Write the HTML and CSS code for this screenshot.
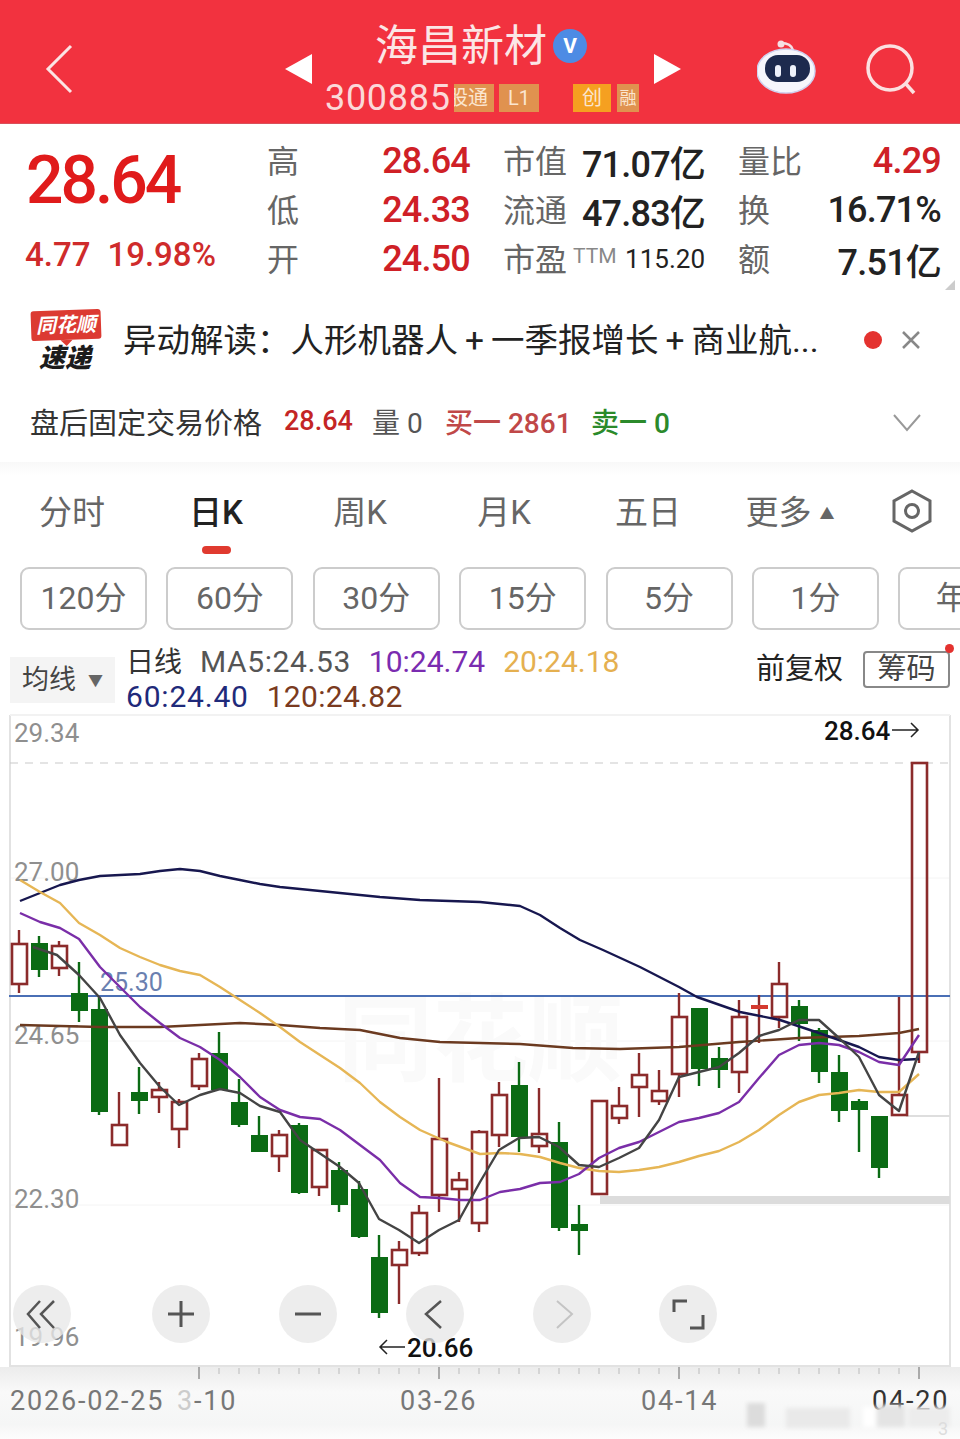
FILE: index.html
```html
<!DOCTYPE html>
<html lang="zh-CN">
<head>
    <meta charset="UTF-8">
    <meta name="viewport" content="width=device-width, initial-scale=1.0">
    <title>海昌新材 300885</title>
    <link rel="stylesheet" href="styles.css">
</head>
<body>
    <header class="head">
        <svg class="back" viewBox="0 0 28 50"><path d="M26 2 L3 25 L26 48"/></svg>
        <div class="pager">
            <span class="tri tri-left"></span>
            <div class="stock">
                <div class="stock-name">
                    <span>海昌新材</span>
                    <span class="vbadge">V</span>
                </div>
                <div class="stock-code">
                    <span class="code">300885</span>
                    <span class="tag tag-clip"><b>股通</b></span>
                    <span class="tag">L1</span>
                    <span class="tag tag-orange">创</span>
                    <span class="tag tag-narrow">融</span>
                </div>
            </div>
            <span class="tri tri-right"></span>
        </div>
        <svg class="robot" viewBox="0 0 60 54">
            <path d="M24 3 Q34 3 36 10" fill="none" stroke="#f6dfe4" stroke-width="2.5"/>
            <circle cx="24" cy="4" r="3.5" fill="#f6dfe4"/>
            <ellipse cx="29" cy="31" rx="29" ry="22" fill="#f6f6fc" stroke="#cfd2f0" stroke-width="1.5"/>
            <rect x="8" y="15" width="45" height="27" rx="13" fill="#1d2a4e"/>
            <rect x="18" y="25" width="6" height="12" rx="3" fill="#eef1fb"/>
            <rect x="33" y="25" width="6" height="12" rx="3" fill="#eef1fb"/>
        </svg>
        <svg class="search" viewBox="0 0 52 52"><circle cx="25" cy="25" r="22"/><path d="M41 41 L49 50"/></svg>
    </header>

    <section class="quote">
        <div class="price">
            <div class="price-now">28.64</div>
            <div class="price-change"><span>4.77</span><span>19.98%</span></div>
        </div>
        <div class="stats">
            <div class="stat"><span class="stat-label">高</span><span class="stat-val red">28.64</span></div>
            <div class="stat"><span class="stat-label">市值</span><span class="stat-val">71.07亿</span></div>
            <div class="stat"><span class="stat-label">量比</span><span class="stat-val red">4.29</span></div>
            <div class="stat"><span class="stat-label">低</span><span class="stat-val red">24.33</span></div>
            <div class="stat"><span class="stat-label">流通</span><span class="stat-val">47.83亿</span></div>
            <div class="stat"><span class="stat-label">换</span><span class="stat-val">16.71%</span></div>
            <div class="stat"><span class="stat-label">开</span><span class="stat-val red">24.50</span></div>
            <div class="stat"><span class="stat-label">市盈<small>TTM</small></span><span class="stat-val stat-small">115.20</span></div>
            <div class="stat"><span class="stat-label">额</span><span class="stat-val">7.51亿</span></div>
        </div>
        <span class="corner"></span>
    </section>

    <section class="notice">
        <div class="logo">
            <div class="logo-tag">同花顺</div>
            <div class="logo-text">速递</div>
        </div>
        <div class="notice-text">异动解读：人形机器人<span class="plus">+</span>一季报增长<span class="plus">+</span>商业航...</div>
        <span class="notice-dot"></span>
        <svg class="notice-close" viewBox="0 0 20 20"><path d="M2 2 L18 18 M18 2 L2 18"/></svg>
    </section>

    <section class="after">
        <span class="after-title">盘后固定交易价格</span>
        <span class="after-price">28.64</span>
        <span class="after-vol">量 0</span>
        <span class="after-buy">买一 2861</span>
        <span class="after-sell">卖一 0</span>
        <svg class="after-more" viewBox="0 0 28 18"><path d="M1 1 L14 16 L27 1"/></svg>
    </section>

    <nav class="tabs">
        <a>分时</a>
        <a class="active">日K</a>
        <a>周K</a>
        <a>月K</a>
        <a>五日</a>
        <a>更多<i class="up-arrow">▲</i></a>
        <svg class="hex" viewBox="0 0 42 44"><path d="M21 2 L39 12 V32 L21 42 L3 32 V12 Z"/><circle cx="21" cy="22" r="6.5"/></svg>
    </nav>

    <div class="periods">
        <a>120分</a>
        <a>60分</a>
        <a>30分</a>
        <a>15分</a>
        <a>5分</a>
        <a>1分</a>
        <a>年K</a>
    </div>

    <div class="legend">
        <div class="ma-btn">均线<i>▼</i></div>
        <div class="ma-lines">
            <div>
                <span class="ma-name">日线</span>
                <span class="ma5">MA5:24.53</span>
                <span class="ma10">10:24.74</span>
                <span class="ma20">20:24.18</span>
            </div>
            <div>
                <span class="ma60">60:24.40</span>
                <span class="ma120">120:24.82</span>
            </div>
        </div>
        <div class="legend-right">
            <span class="fq">前复权</span>
            <span class="chip">筹码</span>
        </div>
    </div>

    <svg class="chart" viewBox="0 710 960 729">
        <defs>
            <linearGradient id="axisBg" x1="0" y1="0" x2="0" y2="1">
                <stop offset="0" stop-color="#ececec"/>
                <stop offset="0.35" stop-color="#f9f9f9"/>
                <stop offset="0.8" stop-color="#f5f6f6"/>
                <stop offset="1" stop-color="#fdfdfd"/>
            </linearGradient>
            <filter id="soft"><feGaussianBlur stdDeviation="2"/></filter>
        </defs>

        <!-- frame and grid -->
        <rect class="axis-bg" x="0" y="1367" width="960" height="72"/>
        <path class="grid" d="M10 878H950M10 1041H950M10 1205H950"/>
        <path class="frame" d="M10 715V1366H950V715"/>
        <path class="frame-top" d="M10 715H950"/>
        <text class="watermark" x="338" y="1074">同花顺</text>
        <path class="dash" d="M10 763H950"/>
        <path class="grid-dark" d="M906 1116H950"/>
        <rect class="support" x="600" y="1196" width="350" height="8"/>
        <path class="blue-line" d="M9 996H950"/>

        <!-- price scale -->
        <text class="scale" x="14" y="742">29.34</text>
        <text class="scale" x="14" y="881">27.00</text>
        <text class="scale" x="14" y="1044">24.65</text>
        <text class="scale" x="14" y="1208">22.30</text>
        <text class="scale" x="14" y="1346">19.96</text>
        <text class="blue-label" x="100" y="991">25.30</text>

        <!-- wicks, falling days -->
        <path class="wick-down" d="M39 936V977M79 962V1022M99 997V1115M139 1067V1114M219 1032V1090M239 1079V1127M259 1116V1152M299 1123V1194M339 1162V1212M359 1181V1238M379 1235V1318M519 1062V1152M559 1122V1231M579 1205V1255M699 1069V1086M719 1047V1088M799 1000V1041M819 1028V1083M839 1055V1122M859 1099V1152M879 1168V1178"/>
        <!-- bodies, falling days -->
        <g class="body-down">
            <rect x="31" y="943" width="17" height="27"/>
            <rect x="71" y="993" width="17" height="18"/>
            <rect x="91" y="1009" width="17" height="103"/>
            <rect x="131" y="1092" width="17" height="9"/>
            <rect x="211" y="1053" width="17" height="37"/>
            <rect x="231" y="1102" width="17" height="23"/>
            <rect x="251" y="1135" width="17" height="17"/>
            <rect x="291" y="1125" width="17" height="68"/>
            <rect x="331" y="1170" width="17" height="35"/>
            <rect x="351" y="1189" width="17" height="48"/>
            <rect x="371" y="1257" width="17" height="56"/>
            <rect x="511" y="1085" width="17" height="52"/>
            <rect x="551" y="1142" width="17" height="86"/>
            <rect x="571" y="1224" width="17" height="7"/>
            <rect x="691" y="1008" width="17" height="61"/>
            <rect x="711" y="1058" width="17" height="12"/>
            <rect x="791" y="1006" width="17" height="18"/>
            <rect x="811" y="1030" width="17" height="42"/>
            <rect x="831" y="1072" width="17" height="39"/>
            <rect x="851" y="1101" width="17" height="9"/>
            <rect x="871" y="1116" width="17" height="52"/>
        </g>

        <!-- wicks, rising days -->
        <path class="wick-up" d="M19 930V944M19 984V993M59 941V946M59 968V976M119 1092V1125M159 1082V1090M159 1097V1113M179 1099V1102M179 1129V1148M199 1053V1059M199 1086V1090M279 1130V1135M279 1156V1172M319 1149V1150M319 1187V1196M399 1241V1250M399 1265V1304M419 1205V1213M419 1253V1256M439 1078V1139M439 1195V1212M459 1172V1180M459 1189V1222M479 1130V1132M479 1223V1232M499 1082V1095M499 1135V1147M539 1088V1134M539 1146V1153M619 1087V1106M619 1118V1124M639 1053V1075M639 1087V1117M659 1070V1091M659 1101V1105M679 993V1017M679 1074V1097M739 1000V1017M739 1072V1093M759 995V1043M779 962V984M779 1017V1028M899 997V1095M919 1052V1063"/>
        <!-- bodies, rising days -->
        <g class="body-up">
            <rect x="12" y="944" width="15" height="40"/>
            <rect x="52" y="946" width="15" height="22"/>
            <rect x="112" y="1125" width="15" height="20"/>
            <rect x="152" y="1090" width="15" height="7"/>
            <rect x="172" y="1102" width="15" height="27"/>
            <rect x="192" y="1059" width="15" height="27"/>
            <rect x="272" y="1135" width="15" height="21"/>
            <rect x="312" y="1150" width="15" height="37"/>
            <rect x="392" y="1250" width="15" height="15"/>
            <rect x="412" y="1213" width="15" height="40"/>
            <rect x="432" y="1139" width="15" height="56"/>
            <rect x="452" y="1180" width="15" height="9"/>
            <rect x="472" y="1132" width="15" height="91"/>
            <rect x="492" y="1095" width="15" height="40"/>
            <rect x="532" y="1134" width="15" height="12"/>
            <rect x="592" y="1101" width="15" height="93"/>
            <rect x="612" y="1106" width="15" height="12"/>
            <rect x="632" y="1075" width="15" height="12"/>
            <rect x="652" y="1091" width="15" height="10"/>
            <rect x="672" y="1017" width="15" height="57"/>
            <rect x="732" y="1017" width="15" height="55"/>
            <rect x="772" y="984" width="15" height="33"/>
            <rect x="892" y="1095" width="15" height="20"/>
            <rect x="912" y="763" width="15" height="289"/>
        </g>
        <rect class="body-flat" x="751" y="1005" width="17" height="4"/>

        <!-- moving averages -->
        <polyline class="ma-line l120" points="20,1025 100,1027 160,1027 200,1025 240,1023 280,1025 320,1028 360,1030 400,1038 440,1042 480,1043 520,1044 573,1048 620,1049 679,1047 739,1042 799,1038 859,1036 899,1033 919,1029"/>
        <polyline class="ma-line l60" points="20,901 40,893 60,885 79,880 100,876 140,874 160,871 180,869 200,871 220,876 240,880 260,884 280,887 300,889 320,891 340,893 380,897 420,900 480,902 500,904 520,906 540,915 560,928 580,940 603,950 640,967 679,987 697,997 740,1012 780,1020 819,1033 859,1047 879,1057 899,1060 919,1059"/>
        <polyline class="ma-line l20" points="20,880 40,892 60,903 79,923 100,935 120,948 140,957 160,965 180,971 200,975 220,987 240,1000 260,1013 280,1027 300,1042 320,1055 340,1068 360,1083 380,1102 400,1117 420,1130 447,1142 480,1154 500,1153 520,1154 540,1157 560,1163 579,1168 599,1171 619,1172 639,1170 659,1167 679,1162 699,1156 719,1151 739,1142 759,1130 779,1115 799,1102 819,1095 839,1093 859,1090 879,1092 899,1092 919,1074"/>
        <polyline class="ma-line l10" points="20,913 40,922 60,928 79,939 100,967 120,987 140,1007 160,1023 180,1038 200,1047 220,1060 240,1077 260,1097 280,1110 300,1117 320,1119 340,1130 360,1145 380,1160 400,1183 420,1197 440,1198 460,1200 480,1200 500,1192 520,1189 540,1183 560,1182 579,1174 599,1158 619,1148 639,1142 659,1132 679,1122 699,1118 719,1113 739,1102 759,1078 779,1055 799,1045 819,1043 839,1045 859,1052 879,1062 899,1065 919,1035"/>
        <polyline class="ma-line l5" points="33,947 57,955 68,965 79,975 100,998 120,1035 140,1063 160,1087 179,1105 200,1095 220,1089 240,1093 260,1106 280,1112 300,1140 340,1167 359,1183 379,1219 399,1230 419,1243 439,1230 459,1220 480,1182 499,1150 519,1138 539,1137 559,1147 579,1165 599,1167 619,1158 639,1148 659,1120 679,1077 699,1072 719,1067 739,1053 759,1036 779,1030 799,1020 819,1020 839,1038 859,1057 879,1095 899,1111 919,1052"/>

        <!-- high and low marks -->
        <text class="mark" x="824" y="740">28.64</text>
        <path class="mark-arrow" d="M892 730H918M911 723L918 730L911 737"/>
        <path class="mark-arrow" d="M405 1347H380M387 1340L380 1347L387 1354"/>
        <text class="mark" x="407" y="1357">20.66</text>

        <!-- chart buttons -->
        <g class="round-btn">
            <circle cx="42" cy="1314" r="29"/>
            <circle cx="181" cy="1314" r="29"/>
            <circle cx="308" cy="1314" r="29"/>
            <circle cx="435" cy="1314" r="29"/>
            <circle cx="562" cy="1314" r="29"/>
            <circle cx="688" cy="1314" r="29"/>
        </g>
        <path class="btn-icon" d="M40 1301L28 1314L40 1328M54 1301L41 1314L54 1328"/>
        <path class="btn-icon btn-thick" d="M168 1314H194M181 1301V1327M295 1314H321"/>
        <path class="btn-icon" d="M441 1301L426 1314L441 1328"/>
        <path class="btn-icon btn-off" d="M557 1301L572 1314L557 1328"/>
        <path class="btn-icon btn-thick" d="M674 1312V1301H687M690 1328H703V1315"/>

        <!-- time axis -->
        <path class="tick" d="M219 1368V1374M239 1368V1374M259 1368V1374M279 1368V1374M299 1368V1374M319 1368V1374M339 1368V1374M359 1368V1374M379 1368V1374M399 1368V1374M419 1368V1374M459 1368V1374M479 1368V1374M499 1368V1374M519 1368V1374M539 1368V1374M559 1368V1374M579 1368V1374M599 1368V1374M619 1368V1374M639 1368V1374M659 1368V1374M699 1368V1374M719 1368V1374M739 1368V1374M759 1368V1374M779 1368V1374M799 1368V1374M819 1368V1374M839 1368V1374M859 1368V1374M879 1368V1374M899 1368V1374"/>
        <path class="tick-big" d="M199 1367V1379M439 1367V1379M679 1367V1379M919 1367V1379"/>
        <text class="date" x="10" y="1410">2026-02-25</text>
        <text class="date date-fade" x="177" y="1410">3</text>
        <text class="date" x="194" y="1410">-10</text>
        <text class="date" x="400" y="1410">03-26</text>
        <text class="date" x="641" y="1410">04-14</text>
        <text class="date date-dark" x="872" y="1410">04-20</text>

        <!-- blurred account mark at the bottom -->
        <g class="smear" filter="url(#soft)">
            <rect x="747" y="1403" width="18" height="24" fill="#dcdcdc"/>
            <rect x="786" y="1408" width="64" height="20" fill="#e9e9e9"/>
            <rect x="863" y="1407" width="12" height="20" fill="#fff"/>
            <rect x="877" y="1405" width="28" height="22" fill="#e4e4e4"/>
            <rect x="908" y="1407" width="42" height="20" fill="#ececec"/>
        </g>
        <text class="smear-text" x="938" y="1435">3</text>
    </svg>
</body>
</html>
```

FILE: styles.css
```css
* {
    box-sizing: border-box;
}

body {
    font-family: Roboto, "Noto Sans CJK SC", sans-serif;
    margin: 0;
    width: 960px;
    height: 1439px;
    overflow: hidden;
    background-color: #fff;
    color: #222;
}

/* header */
.head {
    display: flex;
    align-items: center;
    height: 124px;
    padding: 14px 0 0 45px;
    background-color: #f2323f;
    border-bottom: 1px solid #d9505a;
}
.back {
    width: 28px;
    height: 50px;
    fill: none;
    stroke: #fbe4e4;
    stroke-width: 3;
}
.pager {
    display: flex;
    align-items: center;
    margin-left: 212px;
}
.tri {
    width: 0;
    height: 0;
    border-top: 15px solid transparent;
    border-bottom: 15px solid transparent;
}
.tri-left {
    border-right: 27px solid #fff;
}
.tri-right {
    border-left: 27px solid #fff;
}
.stock {
    width: 342px;
    margin-top: -2px;
}
.stock-name {
    display: flex;
    align-items: center;
    height: 46px;
    margin-left: 63px;
    font-size: 43px;
    line-height: 40px;
    color: #fbe6e6;
}
.stock-name span:first-child {
    margin-top: 5px;
}
.vbadge {
    width: 34px;
    height: 34px;
    margin: 5px 0 0 6px;
    border-radius: 50%;
    background-color: #4d8be4;
    color: #fff;
    font-size: 21px;
    font-weight: 700;
    line-height: 34px;
    text-align: center;
}
.stock-code {
    display: flex;
    align-items: center;
    height: 34px;
    margin: 14px 0 0 13px;
}
.code {
    width: 129px;
    font-size: 36px;
    letter-spacing: 0.7px;
    color: #fbd9d9;
}
.tag {
    width: 40px;
    height: 28px;
    margin-right: 5px;
    overflow: hidden;
    background-color: #e0924f;
    color: #fbe6d0;
    font-size: 20px;
    line-height: 28px;
    text-align: center;
}
.tag-clip {
    position: relative;
}
.tag-clip b {
    position: absolute;
    right: 6px;
    width: 40px;
    font-weight: 400;
}
.tag-orange {
    width: 38px;
    margin-left: 29px;
    background-color: #f5a020;
}
.tag-narrow {
    width: 22px;
    margin: 0 0 0 1px;
    font-size: 17px;
}
.robot {
    width: 60px;
    height: 54px;
    margin: -4px 0 0 76px;
}
.search {
    width: 52px;
    height: 52px;
    margin-left: 48px;
    fill: none;
    stroke: #fbe0e0;
    stroke-width: 3.5;
}

/* quote */
.quote {
    position: relative;
    display: flex;
    height: 172px;
    padding-top: 12px;
}
.price {
    width: 267px;
    padding-left: 25px;
    color: #e01b1b;
}
.price-now {
    margin-top: 12px;
    padding-left: 1px;
    font-size: 66px;
    font-weight: 500;
    line-height: 66px;
    letter-spacing: -3px;
}
.price-change {
    display: flex;
    gap: 17px;
    margin-top: 21px;
    color: #cf2b2b;
    font-size: 33px;
    font-weight: 500;
    line-height: 40px;
}
.stats {
    display: grid;
    grid-template-columns: 203px 202px 203px;
    grid-auto-rows: 49px;
    column-gap: 33px;
}
.stat {
    display: flex;
    align-items: center;
    justify-content: space-between;
}
.stat-label {
    padding-bottom: 4px;
    color: #666;
    font-size: 32px;
}
.stat-label small {
    margin-left: 6px;
    color: #888;
    font-size: 21px;
    vertical-align: 8px;
}
.stat-val {
    font-size: 36px;
    font-weight: 500;
    letter-spacing: -0.8px;
    white-space: nowrap;
}
.stat-small {
    font-size: 26px;
    font-weight: 400;
    letter-spacing: 0;
}
.red {
    color: #cf2026;
}
.corner {
    position: absolute;
    right: 5px;
    bottom: 6px;
    border-left: 10px solid transparent;
    border-bottom: 10px solid #ccc;
}

/* notice */
.notice {
    display: flex;
    align-items: center;
    height: 88px;
    padding-left: 31px;
}
.logo {
    width: 72px;
    height: 62px;
    margin-top: 6px;
}
.logo-tag {
    position: relative;
    width: 70px;
    height: 30px;
    margin-top: -2px;
    background-color: #dc3a32;
    border-radius: 3px;
    color: #fff;
    font-size: 20px;
    font-style: italic;
    font-weight: 700;
    line-height: 30px;
    text-align: center;
    transform: rotate(-2deg);
}
.logo-tag::after {
    content: "";
    position: absolute;
    left: 29px;
    top: 30px;
    border-top: 6px solid #dc3a32;
    border-left: 6px solid transparent;
    border-right: 6px solid transparent;
}
.logo-text {
    margin: 4px 0 0 8px;
    color: #1c1c1c;
    font-size: 26px;
    font-style: italic;
    font-weight: 900;
    line-height: 28px;
}
.notice-text {
    width: 713px;
    margin: -6px 0 0 20px;
    color: #222;
    font-size: 33.5px;
    white-space: nowrap;
}
.plus {
    margin: 0 7px;
}
.notice-dot {
    width: 18px;
    height: 18px;
    margin-left: 28px;
    border-radius: 50%;
    background-color: #e4322f;
}
.notice-close {
    width: 20px;
    height: 20px;
    margin-left: 19px;
    fill: none;
    stroke: #888;
    stroke-width: 2.5;
}

/* after hours */
.after {
    display: flex;
    align-items: center;
    height: 78px;
    padding: 0 0 4px 30px;
    font-size: 28px;
    white-space: nowrap;
}
.after-title {
    width: 254px;
    color: #333;
    font-size: 29px;
}
.after-price {
    width: 88px;
    color: #c42525;
    font-size: 27px;
    font-weight: 500;
}
.after-vol {
    width: 73px;
    color: #555;
}
.after-buy {
    width: 146px;
    color: #c04848;
    font-weight: 500;
}
.after-sell {
    width: 302px;
    color: #2b8a2b;
    font-weight: 500;
}
.after-more {
    width: 28px;
    height: 18px;
    margin-top: 4px;
    fill: none;
    stroke: #999;
    stroke-width: 2;
}

/* tabs */
.tabs {
    display: grid;
    grid-template-columns: repeat(6, 144px) 1fr;
    align-items: center;
    height: 95px;
    background: linear-gradient(#f8f8f8, #fff 14px);
    color: #666;
    font-size: 33px;
    text-align: center;
}
.tabs .active {
    position: relative;
    color: #222;
    font-weight: 500;
}
.tabs .active::after {
    content: "";
    position: absolute;
    left: 58px;
    top: 60px;
    width: 29px;
    height: 8px;
    border-radius: 4px;
    background-color: #e03a2f;
}
.up-arrow {
    margin: 0 4px 0 8px;
    font-size: 15px;
    font-style: normal;
    vertical-align: 5px;
}
.hex {
    width: 42px;
    height: 44px;
    margin-top: 3px;
    justify-self: center;
    fill: none;
    stroke: #666;
    stroke-width: 3;
}

/* period buttons */
.periods {
    display: flex;
    gap: 19.4px;
    height: 63px;
    margin-top: 10px;
    padding-left: 20px;
    overflow: hidden;
}
.periods a {
    flex-shrink: 0;
    width: 127px;
    border: 2px solid #ccc;
    border-radius: 9px;
    color: #666;
    font-size: 32px;
    line-height: 59px;
    text-align: center;
}

/* legend */
.legend {
    display: flex;
    height: 70px;
    margin-top: 10px;
    padding-left: 10px;
}
.ma-btn {
    width: 105px;
    height: 46px;
    margin-top: 17px;
    padding-left: 12px;
    background-color: #f4f4f4;
    color: #444;
    font-size: 27px;
    line-height: 46px;
}
.ma-btn i {
    margin-left: 12px;
    color: #666;
    font-size: 15px;
    font-style: normal;
    vertical-align: 3px;
}
.ma-lines {
    margin: 5px 0 0 11px;
    font-size: 30px;
    line-height: 34px;
    white-space: nowrap;
}
.ma-lines span {
    margin-right: 10.5px;
}
.ma-name {
    color: #333;
    font-size: 28px;
}
.ma5 {
    color: #555;
    letter-spacing: 0.6px;
}
.ma10 {
    color: #7a2cb0;
}
.ma20 {
    color: #e5b050;
}
.ma60 {
    color: #1f2a7a;
    letter-spacing: 0.8px;
}
.ma120 {
    color: #7a3a20;
    letter-spacing: 0.3px;
}
.legend-right {
    display: flex;
    align-items: flex-start;
    margin-left: auto;
    padding: 11px 10px 0 0;
}
.fq {
    margin-right: 20px;
    color: #222;
    font-size: 29px;
    line-height: 37px;
}
.chip {
    position: relative;
    width: 87px;
    height: 37px;
    border: 2px solid #888;
    border-radius: 4px;
    color: #444;
    font-size: 29px;
    line-height: 33px;
    text-align: center;
}
.chip::after {
    content: "";
    position: absolute;
    right: -6px;
    top: -9px;
    width: 9px;
    height: 9px;
    border-radius: 50%;
    background-color: #e4322f;
}

/* chart */
.chart {
    display: block;
    width: 960px;
    height: 729px;
}
.axis-bg {
    fill: url(#axisBg);
}
.grid {
    fill: none;
    stroke: #f4f4f4;
    stroke-width: 1;
}
.grid-dark {
    fill: none;
    stroke: #dedede;
    stroke-width: 2;
}
.frame {
    fill: none;
    stroke: #e2e2e2;
    stroke-width: 2;
}
.frame-top {
    fill: none;
    stroke: #f2f2f2;
    stroke-width: 2;
}
.dash {
    fill: none;
    stroke: #c9c9c9;
    stroke-width: 1;
    stroke-dasharray: 8 7;
}
.support {
    fill: #dcdcdc;
}
.blue-line {
    fill: none;
    stroke: #4a6fb5;
    stroke-width: 2;
}
.watermark {
    fill: #fafafa;
    font-size: 95px;
    font-weight: 700;
}
.scale {
    fill: #8f8f8f;
    font-size: 26px;
}
.blue-label {
    fill: #6a80b0;
    font-size: 25px;
}
.wick-up {
    fill: none;
    stroke: #8b2b2b;
    stroke-width: 2.4;
}
.wick-down {
    fill: none;
    stroke: #0b6b14;
    stroke-width: 2.4;
}
.body-up rect {
    fill: none;
    stroke: #8b2b2b;
    stroke-width: 2.6;
}
.body-down rect {
    fill: #0b6b14;
}
.body-flat {
    fill: #d43a2f;
}
.ma-line {
    fill: none;
    stroke-width: 2.4;
    stroke-linejoin: round;
}
.l5 {
    stroke: #444;
}
.l10 {
    stroke: #7a2ea8;
}
.l20 {
    stroke: #e6b655;
}
.l60 {
    stroke: #17174f;
}
.l120 {
    stroke: #6b3a20;
}
.mark {
    fill: #111;
    font-size: 26px;
    font-weight: 500;
}
.mark-arrow {
    fill: none;
    stroke: #222;
    stroke-width: 1.5;
}
.round-btn circle {
    fill: #e8e8e8;
    opacity: 0.78;
}
.btn-icon {
    fill: none;
    stroke: #555;
    stroke-width: 2.5;
}
.btn-thick {
    stroke-width: 3;
}
.btn-off {
    stroke: #c4c4c4;
    stroke-width: 2;
}
.tick {
    fill: none;
    stroke: #bbb;
    stroke-width: 1;
}
.tick-big {
    fill: none;
    stroke: #aaa;
    stroke-width: 2;
}
.date {
    fill: #777;
    font-size: 27px;
    letter-spacing: 1.8px;
}
.date-fade {
    fill: #ccc;
}
.date-dark {
    fill: #333;
}
.smear-text {
    fill: #ddd;
    font-size: 18px;
}
```
